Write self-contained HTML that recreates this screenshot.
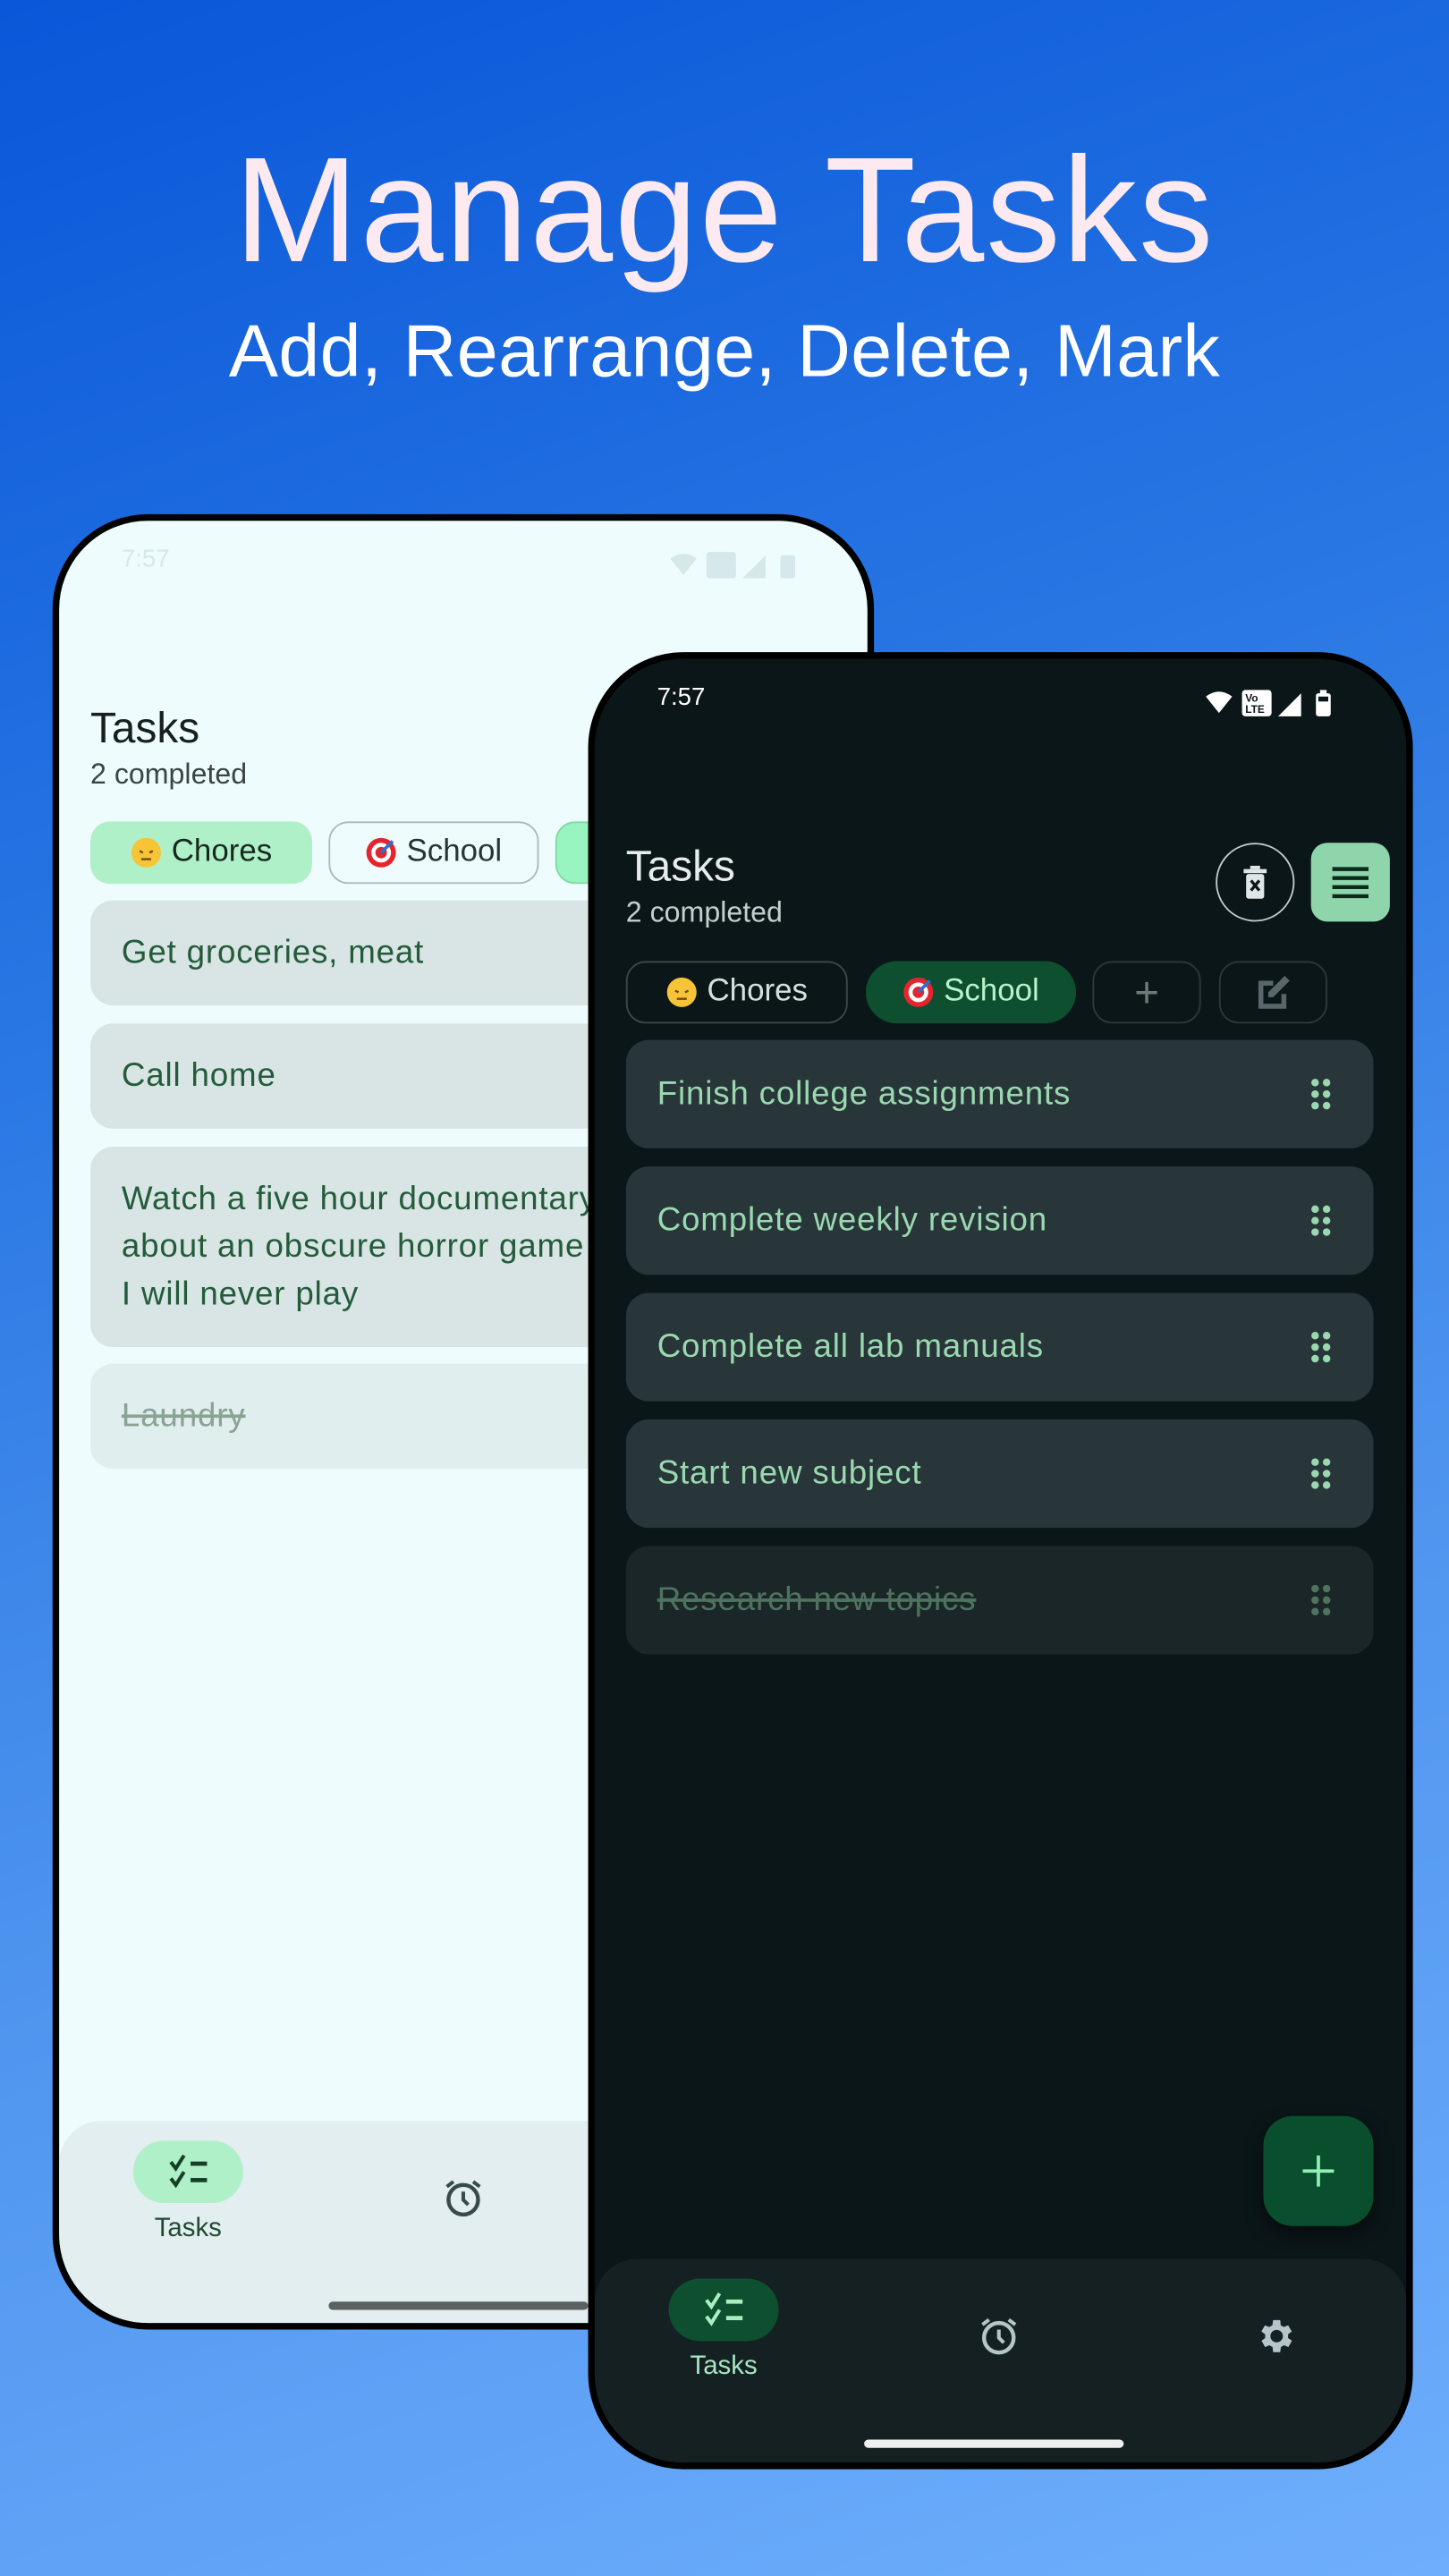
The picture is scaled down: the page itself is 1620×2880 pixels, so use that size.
<!DOCTYPE html>
<html><head><meta charset="utf-8"><style>
*{margin:0;padding:0;box-sizing:border-box}
html,body{width:1620px;height:2880px;overflow:hidden}
body{background:linear-gradient(160deg,#0a57d9 0%,#2a78e4 35%,#4f95ef 65%,#6eaefc 100%);font-family:"Liberation Sans",sans-serif}
#s{position:absolute;left:0;top:0;width:882px;height:1568px;transform:scale(1.83673);transform-origin:0 0}
.h1{position:absolute;left:0;width:882px;top:77px;text-align:center;font-size:91px;color:#fdeaf0;letter-spacing:1px}
.h2{position:absolute;left:0;width:882px;top:188px;text-align:center;font-size:45px;color:#fff;letter-spacing:.2px}
.ph{position:absolute;border:4px solid #000;border-radius:58px;overflow:hidden}
.st{position:absolute;left:38px;top:15px;font-size:15px}
.t{position:absolute;left:19px;top:111px;font-size:26px}
.c{position:absolute;left:19px;top:144px;font-size:17.5px}
.chip{position:absolute;height:38px;border-radius:12px;font-size:19px;display:flex;align-items:center;justify-content:center;gap:5px}
.card{position:absolute;left:19px;border-radius:14px;font-size:20px;letter-spacing:.45px;padding-left:19px;display:flex;align-items:center;line-height:29px}
.nav{position:absolute;left:0;right:0;top:974px;bottom:0;border-radius:26px 26px 0 0}
.pill{position:absolute;left:45px;top:986px;width:67px;height:38px;border-radius:19px;display:flex;align-items:center;justify-content:center}
.nl{position:absolute;left:45px;width:67px;top:1031px;text-align:center;font-size:16px}
.bar{position:absolute;left:164px;width:158px;top:1084px;height:5px;border-radius:3px}
.dots{position:absolute;right:26px;top:50%;transform:translateY(-50%)}
</style></head><body><div id="s">
<div class="h1">Manage Tasks</div>
<div class="h2">Add, Rearrange, Delete, Mark</div>

<!-- light phone -->
<div class="ph" style="left:32px;top:313px;width:500px;height:1105px;background:#eefcfd">
 <div class="st" style="color:#d6e8ea">7:57</div>
 <svg style="position:absolute;left:372px;top:18px" width="80" height="18" viewBox="0 0 80 18"><g fill="#d6e8ea"><path d="M0 5Q8-1 16 5L8 15Z"/><rect x="22" y="1" width="18" height="16" rx="2"/><path d="M44 17L58 3V17Z"/><rect x="67" y="3" width="9" height="14" rx="1.5"/></g></svg>
 <div class="t" style="color:#17201f">Tasks</div>
 <div class="c" style="color:#3b4644">2 completed</div>
 <div class="chip" style="left:19px;top:183px;width:135px;background:#b0f0c8;color:#17291f"><svg width="20" height="20" viewBox="0 0 20 20"><circle cx="10" cy="10" r="9" fill="#f7c436"/><path d="M6 9l2 1M14 9l-2 1M7 14h6" stroke="#6b4a1a" stroke-width="1.3" fill="none"/></svg>Chores</div>
 <div class="chip" style="left:164px;top:183px;width:128px;border:1.5px solid #a9b9b9;color:#2a3433"><svg width="20" height="20" viewBox="0 0 20 20"><circle cx="10" cy="10" r="9" fill="#e3262e"/><circle cx="10" cy="10" r="6" fill="#fff"/><circle cx="10" cy="10" r="3.5" fill="#e3262e"/><path d="M10 10L17 3" stroke="#2b6fd1" stroke-width="2"/></svg>School</div>
 <div class="chip" style="left:302px;top:183px;width:120px;background:#98f5bf;border:1.5px solid #7fd9a4"></div>
 <div class="card" style="top:231px;height:64px;width:440px;background:#d8e5e4;color:#235b3b">Get groceries, meat</div>
 <div class="card" style="top:306px;height:64px;width:440px;background:#d8e5e4;color:#235b3b">Call home</div>
 <div class="card" style="top:381px;height:122px;width:440px;background:#d8e5e4;color:#235b3b">Watch a five hour documentary<br>about an obscure horror game<br>I will never play</div>
 <div class="card" style="top:513px;height:64px;width:440px;background:#e1eeee;color:#8ba395;text-decoration:line-through">Laundry</div>
 <div class="nav" style="background:#e2eef0"></div>
 <div class="pill" style="background:#b0f0c8"><svg width="26" height="22" viewBox="0 0 26 22"><path d="M2 5l3 4 5-8M2 15l3 4 5-8" stroke="#153f28" stroke-width="2.2" fill="none"/><path d="M14 6h10M14 16h10" stroke="#153f28" stroke-width="2.6"/></svg></div>
 <div class="nl" style="color:#1f4a31">Tasks</div>
 <svg style="position:absolute;left:233px;top:1008px" width="26" height="26" viewBox="0 0 26 26"><circle cx="13" cy="14" r="9" stroke="#3a4a4a" stroke-width="2.4" fill="none"/><path d="M13 9v5l3 3M3 6l4-3M23 6l-4-3" stroke="#3a4a4a" stroke-width="2.2" fill="none"/></svg>
 <div class="bar" style="background:#5c6262"></div>
</div>

<!-- dark phone -->
<div class="ph" style="left:358px;top:397px;width:502px;height:1106px;background:#0b1618">
 <div class="st" style="color:#fff">7:57</div>
 <svg style="position:absolute;left:372px;top:18px" width="80" height="18" viewBox="0 0 80 18"><path d="M0 5Q8-1 16 5L8 15Z" fill="#fff"/><rect x="22" y="1" width="18" height="16" rx="2" fill="#fff"/><text x="24" y="8" font-size="6.5" font-family="Liberation Sans" font-weight="bold" fill="#0b1618">Vo</text><text x="24" y="15" font-size="6.5" font-family="Liberation Sans" font-weight="bold" fill="#0b1618">LTE</text><path d="M44 17L58 3V17Z" fill="#fff"/><rect x="67" y="3" width="9" height="14" rx="1.5" fill="#fff"/><rect x="69.5" y="1" width="4" height="3" fill="#fff"/><rect x="68.5" y="5" width="6" height="3" fill="#0b1618"/></svg>
 <div class="t" style="color:#e6eceb">Tasks</div>
 <div class="c" style="color:#c6cfcf">2 completed</div>
 <div style="position:absolute;left:378px;top:112px;width:48px;height:48px;border:1.5px solid #c4cccc;border-radius:50%"><svg style="position:absolute;left:15px;top:12px" width="16" height="22" viewBox="0 0 16 22"><rect x="1" y="3" width="14" height="2.5" fill="#dfe6e6"/><rect x="5" y="1" width="6" height="2" fill="#dfe6e6"/><rect x="2.5" y="6" width="11" height="15" rx="1.5" fill="#dfe6e6"/><path d="M5.5 10l5 6M10.5 10l-5 6" stroke="#0b1618" stroke-width="1.8"/></svg></div>
 <div style="position:absolute;left:436px;top:112px;width:48px;height:48px;background:#8fd5ab;border-radius:10px"><svg style="position:absolute;left:12px;top:13px" width="24" height="22" viewBox="0 0 24 22"><path d="M1 3h22M1 8.5h22M1 14h22M1 19.5h22" stroke="#0b2a1a" stroke-width="2.4"/></svg></div>
 <div class="chip" style="left:19px;top:184px;width:135px;border:1.5px solid #3c4a4c;color:#d8e0df"><svg width="20" height="20" viewBox="0 0 20 20"><circle cx="10" cy="10" r="9" fill="#f7c436"/><path d="M6 9l2 1M14 9l-2 1M7 14h6" stroke="#6b4a1a" stroke-width="1.3" fill="none"/></svg>Chores</div>
 <div class="chip" style="left:165px;top:184px;width:128px;background:#0d4f2f;color:#b8f2cc;border-radius:19px"><svg width="20" height="20" viewBox="0 0 20 20"><circle cx="10" cy="10" r="9" fill="#e3262e"/><circle cx="10" cy="10" r="6" fill="#fff"/><circle cx="10" cy="10" r="3.5" fill="#e3262e"/><path d="M10 10L17 3" stroke="#2b6fd1" stroke-width="2"/></svg>School</div>
 <div class="chip" style="left:303px;top:184px;width:66px;border:1.5px solid #2c3a3c;color:#6d7a7a;font-size:26px">+</div>
 <div class="chip" style="left:380px;top:184px;width:66px;border:1.5px solid #2c3a3c"><svg width="24" height="24" viewBox="0 0 24 24"><path d="M3 5h9v3H6v11h11v-6h3v9H3Z" fill="#59666a"/><path d="M9 12L19 2l3 3-10 10H9Z" fill="#59666a"/></svg></div>
 <div class="card" style="top:232px;height:66px;width:455px;background:#28363a;color:#9ad9b0">Finish college assignments<svg class="dots" width="12" height="20" viewBox="0 0 12 20"><g fill="#9ad9b0"><circle cx="2.5" cy="3" r="2.3"/><circle cx="9.5" cy="3" r="2.3"/><circle cx="2.5" cy="10" r="2.3"/><circle cx="9.5" cy="10" r="2.3"/><circle cx="2.5" cy="17" r="2.3"/><circle cx="9.5" cy="17" r="2.3"/></g></svg></div>
 <div class="card" style="top:309px;height:66px;width:455px;background:#28363a;color:#9ad9b0">Complete weekly revision<svg class="dots" width="12" height="20" viewBox="0 0 12 20"><g fill="#9ad9b0"><circle cx="2.5" cy="3" r="2.3"/><circle cx="9.5" cy="3" r="2.3"/><circle cx="2.5" cy="10" r="2.3"/><circle cx="9.5" cy="10" r="2.3"/><circle cx="2.5" cy="17" r="2.3"/><circle cx="9.5" cy="17" r="2.3"/></g></svg></div>
 <div class="card" style="top:386px;height:66px;width:455px;background:#28363a;color:#9ad9b0">Complete all lab manuals<svg class="dots" width="12" height="20" viewBox="0 0 12 20"><g fill="#9ad9b0"><circle cx="2.5" cy="3" r="2.3"/><circle cx="9.5" cy="3" r="2.3"/><circle cx="2.5" cy="10" r="2.3"/><circle cx="9.5" cy="10" r="2.3"/><circle cx="2.5" cy="17" r="2.3"/><circle cx="9.5" cy="17" r="2.3"/></g></svg></div>
 <div class="card" style="top:463px;height:66px;width:455px;background:#28363a;color:#9ad9b0">Start new subject<svg class="dots" width="12" height="20" viewBox="0 0 12 20"><g fill="#9ad9b0"><circle cx="2.5" cy="3" r="2.3"/><circle cx="9.5" cy="3" r="2.3"/><circle cx="2.5" cy="10" r="2.3"/><circle cx="9.5" cy="10" r="2.3"/><circle cx="2.5" cy="17" r="2.3"/><circle cx="9.5" cy="17" r="2.3"/></g></svg></div>
 <div class="card" style="top:540px;height:66px;width:455px;background:#1b2628;color:#4e735e;text-decoration:line-through">Research new topics<svg class="dots" width="12" height="20" viewBox="0 0 12 20"><g fill="#4e735e"><circle cx="2.5" cy="3" r="2.3"/><circle cx="9.5" cy="3" r="2.3"/><circle cx="2.5" cy="10" r="2.3"/><circle cx="9.5" cy="10" r="2.3"/><circle cx="2.5" cy="17" r="2.3"/><circle cx="9.5" cy="17" r="2.3"/></g></svg></div>
 <div style="position:absolute;left:407px;top:887px;width:67px;height:67px;border-radius:18px;background:#0a4f2d;box-shadow:0 4px 10px rgba(0,0,0,.5)"><svg style="position:absolute;left:24px;top:24px" width="19" height="19" viewBox="0 0 19 19"><path d="M9.5 0v19M0 9.5h19" stroke="#8ff0b5" stroke-width="2"/></svg></div>
 <div class="nav" style="background:#152023"></div>
 <div class="pill" style="background:#0d4f2f"><svg width="26" height="22" viewBox="0 0 26 22"><path d="M2 5l3 4 5-8M2 15l3 4 5-8" stroke="#a6f0c2" stroke-width="2.2" fill="none"/><path d="M14 6h10M14 16h10" stroke="#a6f0c2" stroke-width="2.6"/></svg></div>
 <div class="nl" style="color:#a6e6c0">Tasks</div>
 <svg style="position:absolute;left:233px;top:1008px" width="26" height="26" viewBox="0 0 26 26"><circle cx="13" cy="14" r="9" stroke="#b5c5c8" stroke-width="2.4" fill="none"/><path d="M13 9v5l3 3M3 6l4-3M23 6l-4-3" stroke="#b5c5c8" stroke-width="2.2" fill="none"/></svg>
 <svg style="position:absolute;left:401px;top:1008px" width="26" height="26" viewBox="0 0 24 24"><path fill="#b5c5c8" d="M19.4 13a7.5 7.5 0 0 0 0-2l2.1-1.6-2-3.5-2.5 1a7 7 0 0 0-1.7-1L15 3h-4l-.4 2.9a7 7 0 0 0-1.7 1l-2.5-1-2 3.5L6.6 11a7.5 7.5 0 0 0 0 2l-2.1 1.6 2 3.5 2.5-1a7 7 0 0 0 1.7 1L11 21h4l.4-2.9a7 7 0 0 0 1.7-1l2.5 1 2-3.5ZM13 15.5a3.5 3.5 0 1 1 0-7 3.5 3.5 0 0 1 0 7Z"/></svg>
 <div class="bar" style="background:#eef0f0"></div>
</div>
</div></body></html>
